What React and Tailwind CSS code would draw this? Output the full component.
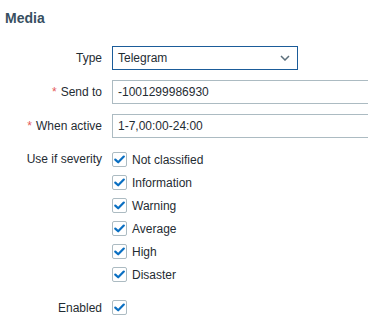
import React from "react";

function Check() {
  return (
    <span className="flex h-[15px] w-[15px] shrink-0 items-center justify-center rounded-[2px] border border-[#acbbc2] bg-white">
      <svg width="11" height="9" viewBox="0 0 11 9">
        <path d="M1.3 4.6 L4.2 7.3 L9.8 1.6" fill="none" stroke="#0a6fc2" strokeWidth="2.2" strokeLinecap="round" strokeLinejoin="round" />
      </svg>
    </span>
  );
}

function Label({ req, children, top }) {
  return (
    <div className={"flex justify-end whitespace-nowrap " + (top ? "items-start leading-[23px]" : "items-center")}>
      {req && <span className="mr-[4px] text-[#e45959]">*</span>}
      <span>{children}</span>
    </div>
  );
}

export default function App() {
  const sev = ["Not classified", "Information", "Warning", "Average", "High", "Disaster"];
  return (
    <div className="h-[327px] w-[368px] overflow-hidden bg-white text-[12px] text-[#1f2c33]" style={{ fontFamily: '"Liberation Sans", Arial, sans-serif' }}>
      <div className="pl-[5px] pt-[10px] text-[14px] font-bold leading-[16px] text-[#384f61]">Media</div>
      <div className="mt-[20px] grid grid-cols-[102px_400px] gap-x-[10px] gap-y-[10px]">
        <Label>Type</Label>
        <div className="flex h-[24px] w-[186px] items-center justify-between border border-[#1b5c99] bg-white pl-[5px] pr-[7px]">
          <span>Telegram</span>
          <svg width="10" height="6" viewBox="0 0 10 6">
            <path d="M1 1 L5 5 L9 1" fill="none" stroke="#5c6f7b" strokeWidth="1.5" />
          </svg>
        </div>
        <Label req>Send to</Label>
        <div className="flex h-[24px] w-[300px] items-center border border-[#acbbc2] bg-white px-[5px]">-1001299986930</div>
        <Label req>When active</Label>
        <div className="flex h-[24px] w-[300px] items-center border border-[#acbbc2] bg-white px-[5px]">1-7,00:00-24:00</div>
        <Label top>Use if severity</Label>
        <div className="flex flex-col">
          {sev.map((s) => (
            <div key={s} className="flex h-[23px] items-center gap-[5px]">
              <Check />
              <span>{s}</span>
            </div>
          ))}
        </div>
        <Label>Enabled</Label>
        <div className="flex h-[23px] items-center">
          <Check />
        </div>
      </div>
    </div>
  );
}
